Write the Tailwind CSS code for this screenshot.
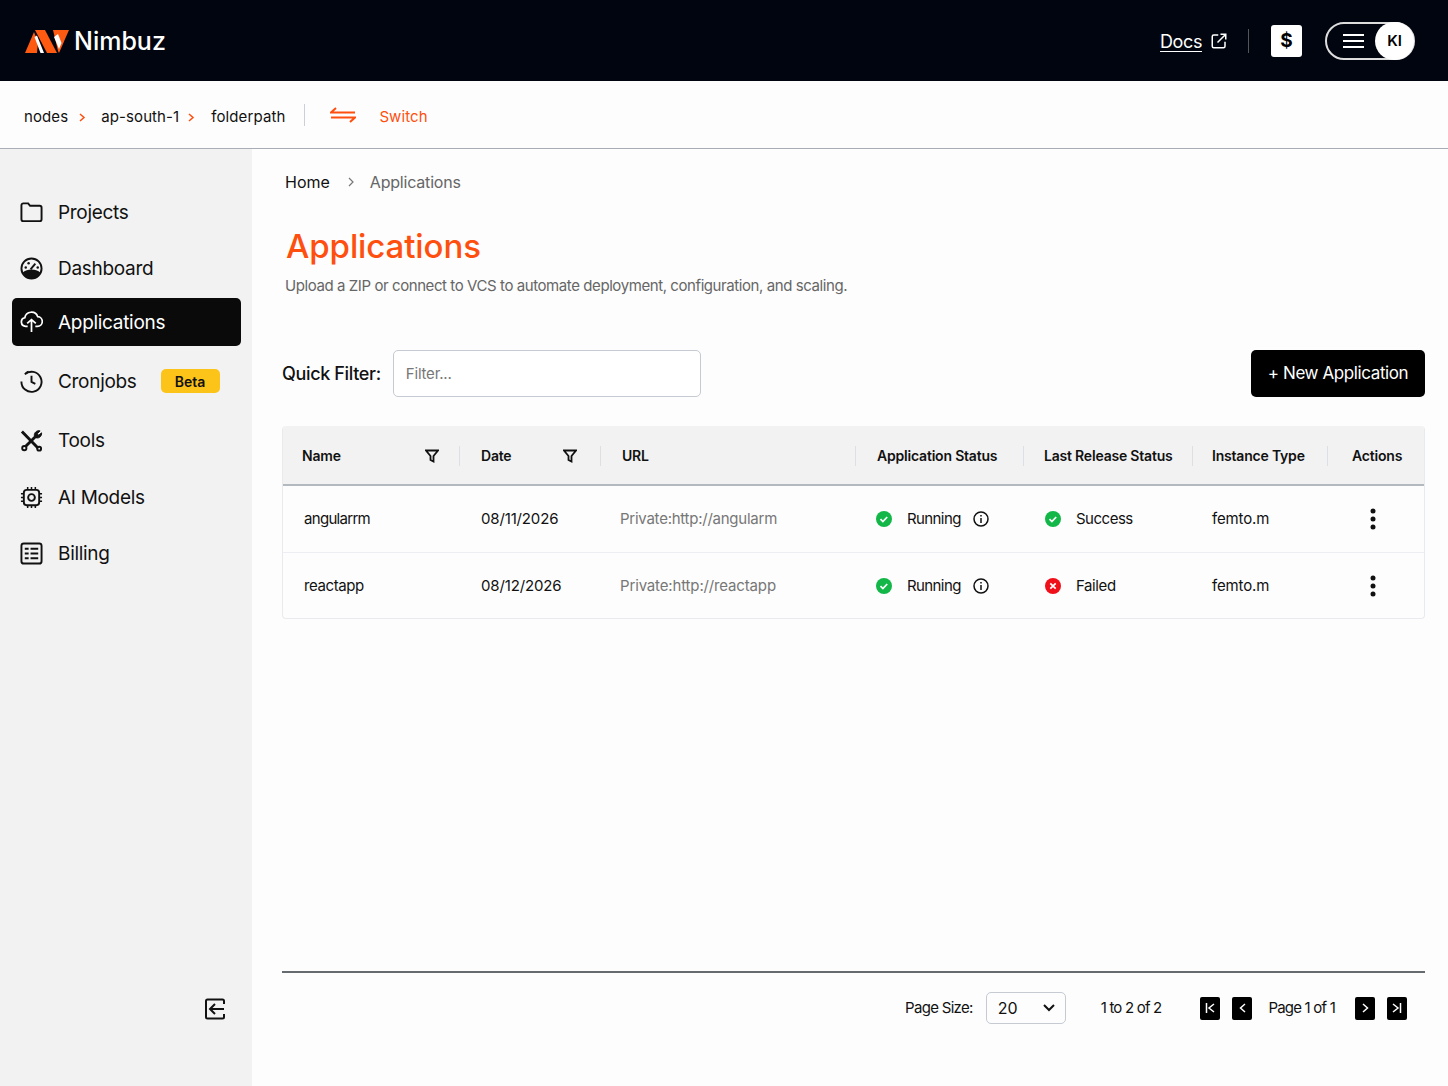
<!DOCTYPE html>
<html lang="en">

<head>
    <meta charset="UTF-8">
    <meta name="viewport" content="width=device-width, initial-scale=1.0">
    <title>Nimbuz - Applications</title>
    <script src="https://cdn.jsdelivr.net/npm/@tailwindcss/browser@4"></script>
</head>

<body class="font-['Inter',sans-serif] bg-[#fdfdfd] text-[#111]">
    <div class="w-[1448px] h-[1086px] flex flex-col overflow-hidden">
        <!-- Top bar -->
        <header class="h-[81px] shrink-0 bg-[#01050f] flex items-center justify-between pl-[25px] pr-[33px]">
            <div class="flex items-center gap-[5px]">
                <svg class="w-[44px] h-[24px]" viewBox="0 0 44 24">
                    <polygon points="0,24 9,3 13,13 12,24" fill="#ff5a12" />
                    <polygon points="10,1 20,1 32,24 22,24" fill="#ff5a12" />
                    <polygon points="9.500,8 12,6.500 19,24 15.500,24" fill="#fff" />
                    <polygon points="28,1 44,1 34,24 33,22" fill="#ff5a12" />
                    <polygon points="29,8 33,5 36.500,14 34,20" fill="#fff" />
                </svg>
                <span class="text-[25px] font-medium text-white pt-[2px]">Nimbuz</span>
            </div>
            <div class="flex items-center">
                <a class="text-[18px] text-white underline underline-offset-3 tracking-[-0.4px] pt-[2px]">Docs</a>
                <svg class="w-[18px] h-[18px] ml-[8px] text-white" fill="none" stroke="currentColor" stroke-width="2" viewBox="0 0 24 24">
                    <path d="M11 4H5a2 2 0 0 0-2 2v13a2 2 0 0 0 2 2h13a2 2 0 0 0 2-2v-6M14 3h7v7M21 3 10 14" />
                </svg>
                <div class="w-px h-[24px] bg-[#555] ml-[20px]"></div>
                <div class="w-[31px] h-[32px] ml-[22px] bg-white rounded-[3px] flex items-center justify-center text-[19px] font-bold text-black pt-[2px]">$</div>
                <div class="w-[90px] h-[38px] ml-[23px] border-2 border-[#ddd] rounded-full flex items-center justify-between pl-[16px] relative">
                    <svg class="w-[21px] h-[16px] text-white" fill="none" stroke="currentColor" stroke-width="2" viewBox="0 0 21 16">
                        <path d="M0 2h21M0 8h21M0 14h21" />
                    </svg>
                    <div class="absolute -right-[1px] -top-[2px] w-[39px] h-[38px] bg-white rounded-full flex items-center justify-center text-[15px] font-semibold text-black pt-[1px]">KI</div>
                </div>
            </div>
        </header>

        <!-- Context bar -->
        <div class="h-[68px] shrink-0 border-b border-[#a9aeb5] flex items-center pl-[24px] pt-[5px] text-[15px] tracking-[0.1px] bg-[#fdfdfd]">
            <span>nodes</span>
            <svg class="w-[7px] h-[9px] ml-[11px] text-[#ff4f0f]" fill="none" stroke="currentColor" stroke-width="1.5" viewBox="0 0 7 9"><path d="m1 1 4 3.500L1 8" /></svg>
            <span class="ml-[15px]">ap-south-1</span>
            <svg class="w-[7px] h-[9px] ml-[9px] text-[#ff4f0f]" fill="none" stroke="currentColor" stroke-width="1.5" viewBox="0 0 7 9"><path d="m1 1 4 3.500L1 8" /></svg>
            <span class="ml-[16px]">folderpath</span>
            <div class="w-px h-[22px] bg-[#ccd0d6] ml-[19px] -mt-[5px]"></div>
            <svg class="w-[26px] h-[16px] ml-[25px] text-[#ff4f0f] -mt-[4px]" fill="none" stroke="currentColor" stroke-width="2" viewBox="0 0 26 16">
                <path d="M25 5.500H1l5-4.500M1 10.500h24l-5 4.500" />
            </svg>
            <span class="ml-[23px] text-[#ff4f0f]">Switch</span>
        </div>

        <div class="flex flex-1 min-h-0">
            <!-- Sidebar -->
            <aside class="w-[252px] shrink-0 bg-[#f2f2f2] pt-[39px] pl-[12px] pr-[11px] flex flex-col text-[19px] tracking-[-0.3px]">
                <div class="h-[48px] flex items-center gap-[15px] pl-[8px]">
                    <svg class="w-[23px] h-[23px]" fill="none" stroke="currentColor" stroke-width="2" viewBox="0 0 24 24">
                        <path d="M1.500 4.500a2 2 0 0 1 2-2h5l2 2.500h10a2 2 0 0 1 2 2v12a2 2 0 0 1-2 2h-17a2 2 0 0 1-2-2z" />
                    </svg>
                    <span class="pt-[2px]">Projects</span>
                </div>
                <div class="h-[48px] mt-[8px] flex items-center gap-[15px] pl-[8px]">
                    <svg class="w-[23px] h-[23px]" viewBox="0 0 24 24">
                        <circle cx="12" cy="12" r="10.500" fill="none" stroke="currentColor" stroke-width="2" />
                        <path d="M3 16c3-2 5-3 9-3s6 1 9 3c-2 5-5 7-9 7s-7-2-9-7z" fill="currentColor" />
                        <path d="m11 13 5-6" stroke="currentColor" stroke-width="2" />
                        <circle cx="6" cy="11" r="1.300" fill="currentColor" />
                        <circle cx="9" cy="6.500" r="1.300" fill="currentColor" />
                        <circle cx="18.500" cy="11" r="1.300" fill="currentColor" />
                    </svg>
                    <span class="pt-[2px]">Dashboard</span>
                </div>
                <div class="h-[48px] mt-[6px] flex items-center gap-[15px] pl-[8px] bg-[#0a0a0a] text-white rounded-[5px]">
                    <svg class="w-[23px] h-[23px] -mt-[2px]" fill="none" stroke="currentColor" stroke-width="1.8" viewBox="0 0 24 24">
                        <path d="M8 17H6a4.500 4.500 0 0 1-1-8.900A7 7 0 0 1 18.500 7a5 5 0 0 1-.5 10h-2M12 23V10M7.500 14 12 10l4.500 4" />
                    </svg>
                    <span class="pt-[2px]">Applications</span>
                </div>
                <div class="h-[48px] mt-[11px] flex items-center gap-[15px] pl-[8px]">
                    <svg class="w-[23px] h-[23px]" fill="none" stroke="currentColor" stroke-width="2" viewBox="0 0 24 24">
                        <path d="M12 6v6.500l4 2M5 4.500A10.500 10.500 0 1 1 1.500 12" />
                        <path d="M9 1.700A10.500 10.500 0 0 0 6 3.500" />
                    </svg>
                    <span class="pt-[2px]">Cronjobs</span>
                    <span class="ml-[9px] w-[59px] h-[24px] bg-[#fcc419] rounded-[5px] flex items-center justify-center text-[14px] font-semibold tracking-normal">Beta</span>
                </div>
                <div class="h-[48px] mt-[11px] flex items-center gap-[15px] pl-[8px]">
                    <svg class="w-[23px] h-[23px]" fill="none" stroke="currentColor" stroke-width="3" viewBox="0 0 24 24">
                        <path d="M2 2.500 19 20M16.500 7.500 6 18" />
                        <path d="M15 7c-.5-3 2.500-6 6-5l-3 3 1.500 1.500 3-2.500c.5 3-2.500 6.500-6 5z" fill="currentColor" stroke-width="1" />
                        <circle cx="4.500" cy="20" r="2.200" stroke-width="2" />
                        <circle cx="20" cy="20.500" r="2" stroke-width="2" />
                    </svg>
                    <span class="pt-[2px]">Tools</span>
                </div>
                <div class="h-[48px] mt-[9px] flex items-center gap-[15px] pl-[8px]">
                    <svg class="w-[23px] h-[23px]" fill="none" stroke="currentColor" stroke-width="2" viewBox="0 0 24 24">
                        <rect x="4" y="4" width="16" height="16" rx="3" />
                        <circle cx="12" cy="12" r="3.500" />
                        <path d="M8 1v3M12 1v3M16 1v3M8 20v3M12 20v3M16 20v3M1 8h3M1 12h3M1 16h3M20 8h3M20 12h3M20 16h3" stroke-width="1.600" />
                    </svg>
                    <span class="pt-[2px]">AI Models</span>
                </div>
                <div class="h-[48px] mt-[8px] flex items-center gap-[15px] pl-[8px]">
                    <svg class="w-[23px] h-[23px]" fill="none" stroke="currentColor" stroke-width="2" viewBox="0 0 24 24">
                        <rect x="1.500" y="1.500" width="21" height="21" rx="2.500" />
                        <path d="M5 7h4M5 12h4M5 17h4M11 7h8M11 12h8M11 17h8" />
                    </svg>
                    <span class="pt-[2px]">Billing</span>
                </div>
                <div class="mt-auto mb-[66px] flex justify-end pr-[15px]">
                    <svg class="w-[22px] h-[22px]" fill="none" stroke="currentColor" stroke-width="2" viewBox="0 0 22 22">
                        <path d="M20 6V3a1.500 1.500 0 0 0-1.500-1.500h-15A1.500 1.500 0 0 0 2 3v16a1.500 1.500 0 0 0 1.500 1.500h15A1.500 1.500 0 0 0 20 19v-3M20 11H6m5-5-5 5 5 5" />
                    </svg>
                </div>
            </aside>

            <!-- Main -->
            <main class="flex-1 min-w-0 pl-[30px] pr-[23px] flex flex-col">
                <nav class="pt-[21px] pl-[3px] flex items-center text-[16px] h-[44px]">
                    <span>Home</span>
                    <svg class="w-[7px] h-[10px] ml-[18px] text-[#777]" fill="none" stroke="currentColor" stroke-width="1.200" viewBox="0 0 7 10"><path d="m1 1 4 4-4 4" /></svg>
                    <span class="ml-[15px] text-[#666] tracking-[-0.2px]">Applications</span>
                </nav>
                <h1 class="mt-[31px] ml-[4px] text-[33px] leading-[44px] font-medium text-[#ff4f0f] tracking-[-0.1px]">Applications</h1>
                <p class="mt-[7px] ml-[3px] text-[15px] leading-[22px] text-[#666] tracking-[-0.42px]">Upload a ZIP or connect to VCS to automate deployment, configuration, and scaling.</p>

                <div class="mt-[53px] flex items-center justify-between h-[47px]">
                    <div class="flex items-center gap-[12px]">
                        <label class="text-[18px] font-medium tracking-[-0.35px]">Quick Filter:</label>
                        <input class="w-[308px] h-[47px] border border-[#c5cad3] rounded-[5px] px-[12px] text-[15px] tracking-[-0.2px] bg-white placeholder:text-[#777]" placeholder="Filter...">
                    </div>
                    <button class="w-[174px] h-[47px] pt-[1px] bg-black text-white rounded-[5px] text-[17px] tracking-[-0.4px]">+ New Application</button>
                </div>

                <!-- Table -->
                <div class="mt-[29px] rounded-[4px] border border-[#e8eaed] border-t-0 text-[15px] tracking-[-0.15px]">
                    <div class="h-[60px] pt-[1px] bg-[#f2f2f2] border-b-2 border-[#b4b9c0] rounded-t-[4px] grid grid-cols-[176px_141px_255px_168px_169px_135px_1fr] items-center text-[14px] font-semibold tracking-[-0.2px]">
                        <div class="pl-[19px] pr-[20px] flex items-center justify-between">
                            <span>Name</span>
                            <svg class="w-[14px] h-[14px]" fill="none" stroke="currentColor" stroke-width="1.800" viewBox="0 0 14 14"><path d="M1 1.500h12L8.500 7v5.500L5.500 11V7z" /></svg>
                        </div>
                        <div class="pl-[21px] pr-[23px] h-[20px] border-l border-[#dcdfe3] flex items-center justify-between">
                            <span>Date</span>
                            <svg class="w-[14px] h-[14px]" fill="none" stroke="currentColor" stroke-width="1.800" viewBox="0 0 14 14"><path d="M1 1.500h12L8.500 7v5.500L5.500 11V7z" /></svg>
                        </div>
                        <div class="pl-[21px] h-[20px] border-l border-[#dcdfe3] flex items-center">URL</div>
                        <div class="pl-[21px] h-[20px] border-l border-[#dcdfe3] flex items-center">Application Status</div>
                        <div class="pl-[20px] h-[20px] border-l border-[#dcdfe3] flex items-center">Last Release Status</div>
                        <div class="pl-[19px] h-[20px] border-l border-[#dcdfe3] flex items-center">Instance Type</div>
                        <div class="pl-[24px] h-[20px] border-l border-[#dcdfe3] flex items-center">Actions</div>
                    </div>
                    <div class="h-[67px] border-b border-[#eceef1] grid grid-cols-[176px_141px_255px_168px_169px_135px_1fr] items-center">
                        <div class="pl-[21px] tracking-[-0.7px]">angularrm</div>
                        <div class="pl-[22px]">08/11/2026</div>
                        <div class="pl-[20px] text-[#777] tracking-[-0.25px]">Private:http://angularm</div>
                        <div class="pl-[21px] flex items-center">
                            <svg class="w-[16px] h-[16px] text-[#12b748]" viewBox="0 0 16 16"><circle cx="8" cy="8" r="8" fill="currentColor" /><path d="m4.500 8.200 2.400 2.300 4.300-4.500" fill="none" stroke="#fff" stroke-width="1.700" /></svg>
                            <span class="ml-[15px] tracking-[-0.6px]">Running</span>
                            <svg class="w-[16px] h-[16px] ml-[12px]" fill="none" stroke="currentColor" stroke-width="1.500" viewBox="0 0 16 16"><circle cx="8" cy="8" r="7" /><path d="M8 7v5M8 4v1.600" /></svg>
                        </div>
                        <div class="pl-[22px] flex items-center">
                            <svg class="w-[16px] h-[16px] text-[#12b748]" viewBox="0 0 16 16"><circle cx="8" cy="8" r="8" fill="currentColor" /><path d="m4.500 8.200 2.400 2.300 4.300-4.500" fill="none" stroke="#fff" stroke-width="1.700" /></svg>
                            <span class="ml-[15px] tracking-[-0.5px]">Success</span>
                        </div>
                        <div class="pl-[20px]">femto.m</div>
                        <div class="pl-[43px]">
                            <svg class="w-[6px] h-[22px]" viewBox="0 0 6 22" fill="currentColor"><circle cx="3" cy="3" r="2.500" /><circle cx="3" cy="11" r="2.500" /><circle cx="3" cy="19" r="2.500" /></svg>
                        </div>
                    </div>
                    <div class="h-[65px] pt-[1px] grid grid-cols-[176px_141px_255px_168px_169px_135px_1fr] items-center">
                        <div class="pl-[21px] tracking-[-0.4px]">reactapp</div>
                        <div class="pl-[22px]">08/12/2026</div>
                        <div class="pl-[20px] text-[#777] tracking-[-0.15px]">Private:http://reactapp</div>
                        <div class="pl-[21px] flex items-center">
                            <svg class="w-[16px] h-[16px] text-[#12b748]" viewBox="0 0 16 16"><circle cx="8" cy="8" r="8" fill="currentColor" /><path d="m4.500 8.200 2.400 2.300 4.300-4.500" fill="none" stroke="#fff" stroke-width="1.700" /></svg>
                            <span class="ml-[15px] tracking-[-0.6px]">Running</span>
                            <svg class="w-[16px] h-[16px] ml-[12px]" fill="none" stroke="currentColor" stroke-width="1.500" viewBox="0 0 16 16"><circle cx="8" cy="8" r="7" /><path d="M8 7v5M8 4v1.600" /></svg>
                        </div>
                        <div class="pl-[22px] flex items-center">
                            <svg class="w-[16px] h-[16px] text-[#f0101a]" viewBox="0 0 16 16"><circle cx="8" cy="8" r="8" fill="currentColor" /><path d="m5.300 5.300 5.400 5.400m0-5.400-5.400 5.400" fill="none" stroke="#fff" stroke-width="1.700" /></svg>
                            <span class="ml-[15px] tracking-[-0.4px]">Failed</span>
                        </div>
                        <div class="pl-[20px]">femto.m</div>
                        <div class="pl-[43px]">
                            <svg class="w-[6px] h-[22px]" viewBox="0 0 6 22" fill="currentColor"><circle cx="3" cy="3" r="2.500" /><circle cx="3" cy="11" r="2.500" /><circle cx="3" cy="19" r="2.500" /></svg>
                        </div>
                    </div>
                </div>

                <!-- Pagination -->
                <div class="mt-auto mb-[62px] border-t-2 border-[#666b70] pt-[19px] pr-[18px] flex items-center justify-end text-[15px]">
                    <span class="tracking-[-0.7px] pt-[1px]">Page Size:</span>
                    <div class="ml-[13px] w-[80px] h-[32px] border border-[#c5cad3] rounded-[5px] flex items-center justify-between pl-[11px] pr-[10px] text-[16px]">
                        <span>20</span>
                        <svg class="w-[12px] h-[8px]" fill="none" stroke="currentColor" stroke-width="2" viewBox="0 0 12 8"><path d="m1 1 5 5 5-5" /></svg>
                    </div>
                    <span class="ml-[35px] tracking-[-0.8px] pt-[1px]">1 to 2 of 2</span>
                    <div class="ml-[39px] w-[20px] h-[23px] bg-black rounded-[2px] text-white flex items-center justify-center">
                        <svg class="w-[10px] h-[10px]" fill="none" stroke="currentColor" stroke-width="1.500" viewBox="0 0 10 10"><path d="M1.500 0v10M9 1 4 5l5 4" /></svg>
                    </div>
                    <div class="ml-[12px] w-[20px] h-[23px] bg-black rounded-[2px] text-white flex items-center justify-center">
                        <svg class="w-[7px] h-[10px]" fill="none" stroke="currentColor" stroke-width="1.500" viewBox="0 0 7 10"><path d="M6 1 1.500 5 6 9" /></svg>
                    </div>
                    <span class="ml-[16px] tracking-[-0.8px] pt-[1px]">Page 1 of 1</span>
                    <div class="ml-[20px] w-[20px] h-[23px] bg-black rounded-[2px] text-white flex items-center justify-center">
                        <svg class="w-[7px] h-[10px]" fill="none" stroke="currentColor" stroke-width="1.500" viewBox="0 0 7 10"><path d="M1 1l4.500 4L1 9" /></svg>
                    </div>
                    <div class="ml-[12px] w-[20px] h-[23px] bg-black rounded-[2px] text-white flex items-center justify-center">
                        <svg class="w-[10px] h-[10px]" fill="none" stroke="currentColor" stroke-width="1.500" viewBox="0 0 10 10"><path d="M8.500 0v10M1 1l5 4-5 4" /></svg>
                    </div>
                </div>
            </main>
        </div>
    </div>
</body>

</html>
